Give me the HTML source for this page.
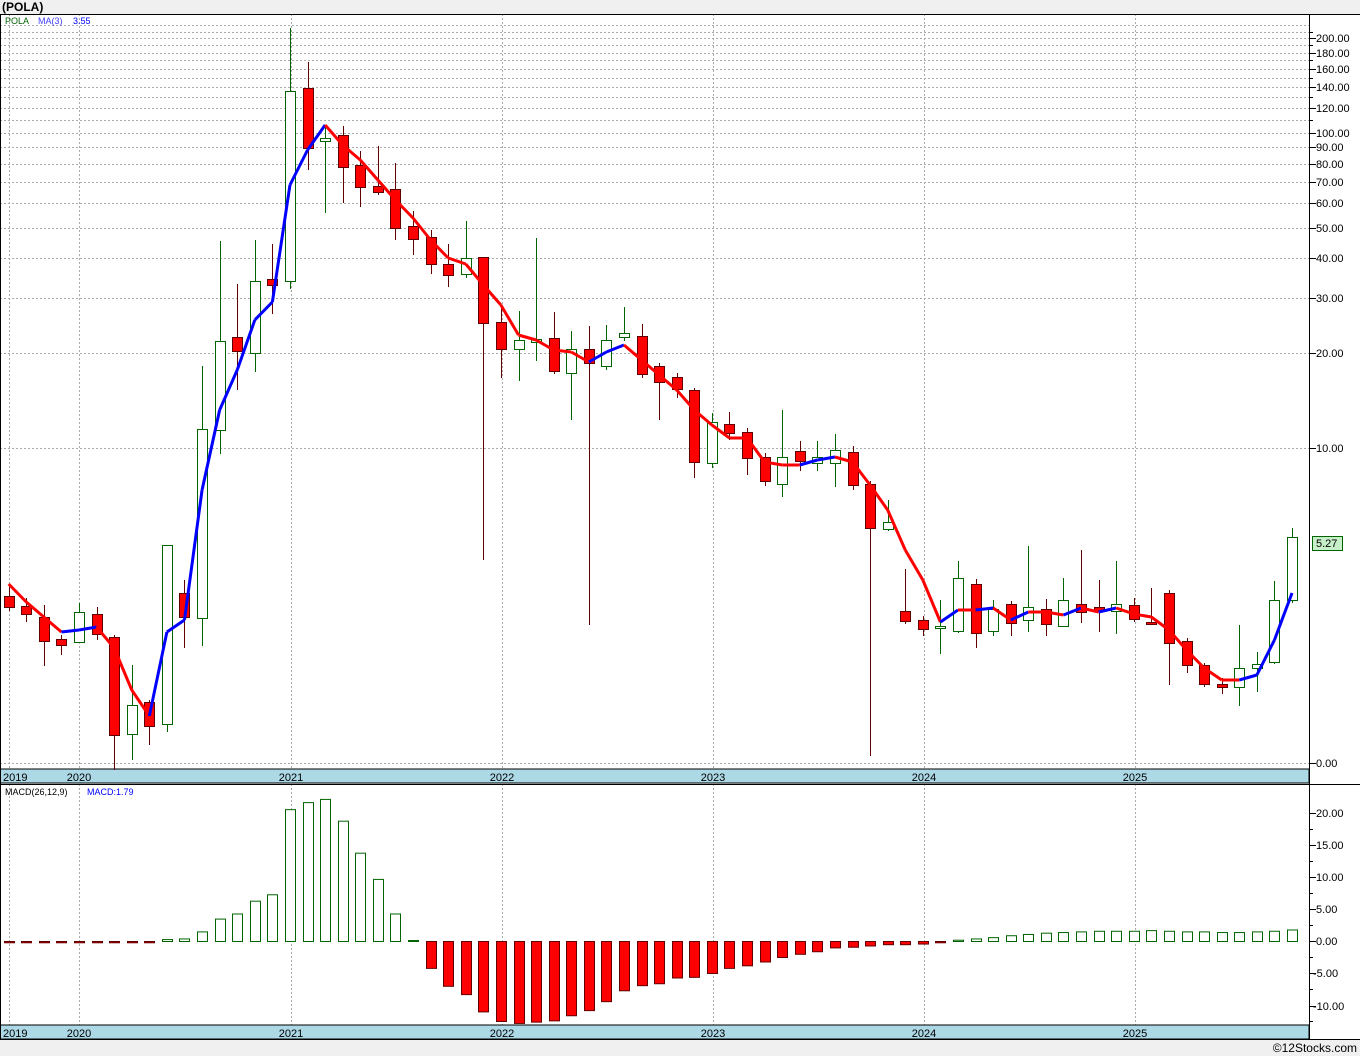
<!DOCTYPE html>
<html><head><meta charset="utf-8"><style>
html,body{margin:0;padding:0;background:#f0f0f0;}
svg{display:block;font-family:"Liberation Sans",sans-serif;}
</style></head><body>
<svg id="s" width="1360" height="1056" xmlns="http://www.w3.org/2000/svg">
<rect x="0" y="0" width="1360" height="1056" fill="#f0f0f0"/>
<rect x="0" y="14" width="1360" height="1025" fill="#fff"/>
<text x="2" y="11" font-size="12" font-weight="bold" fill="#000">(POLA)</text>
<g id="g"></g>
<text x="5" y="24" font-size="9" fill="#006400">POLA</text>
<text x="38" y="24" font-size="9" fill="#4040ff">MA(3)</text>
<text x="73" y="24" font-size="9" fill="#0000ff">3.55</text>
<text x="5" y="795" font-size="9" fill="#000">MACD(26,12,9)</text>
<text x="87" y="795" font-size="9" fill="#0000ff">MACD:1.79</text>
<text x="1357" y="1052" font-size="12" fill="#000" text-anchor="end">©12Stocks.com</text>
</svg>
<script>
var g=document.getElementById('g'),h='';
function ln(x1,y1,x2,y2,c,w,d){h+='<line x1="'+x1+'" y1="'+y1+'" x2="'+x2+'" y2="'+y2+'" stroke="'+c+'" stroke-width="'+(w||1)+'"'+(d?' stroke-dasharray="'+d+'"':'')+'/>';}
function Y(v){return 448-315*Math.log10(v/10);}
var levs=[10,20,30,40,50,60,70,80,90,100,110,120,130,140,150,160,170,180,190,200,210,220];
levs.forEach(function(v){var y=Math.round(Y(v))+.5;ln(0,y,1309,y,'#aaa',1,'2,2');});
ln(0,763.5,1309,763.5,'#aaa',1,'2,2');
var yrs=[[9,'2019'],[79,'2020'],[291,'2021'],[502,'2022'],[713,'2023'],[924,'2024'],[1135,'2025']];
yrs.forEach(function(a){ln(a[0]+.5,14,a[0]+.5,769,'#aaa',1,'2,2');ln(a[0]+.5,784,a[0]+.5,1025,'#aaa',1,'2,2');});
// date strips
h+='<rect x="0" y="769" width="1309" height="14" fill="#add8e6" stroke="#000"/>';
h+='<rect x="0" y="1025" width="1309" height="14" fill="#add8e6" stroke="#000"/>';
yrs.forEach(function(a){h+='<text x="'+(a[0]+(a[0]<20?-6:0))+'" y="781" font-size="11" text-anchor="'+(a[0]<20?'start':'middle')+'">'+a[1]+'</text>';h+='<text x="'+(a[0]+(a[0]<20?-6:0))+'" y="1037" font-size="11" text-anchor="'+(a[0]<20?'start':'middle')+'">'+a[1]+'</text>';});
// borders
ln(0,14.5,1360,14.5,'#000');ln(1309.5,14,1309.5,1039,'#000');ln(0,784.5,1360,784.5,'#000');ln(0,1039.5,1360,1039.5,'#000');ln(.5,14,.5,1039,'#000');
// right axis labels
var lab=[200,180,160,140,120,100,90,80,70,60,50,40,30,20,10];
lab.forEach(function(v){var y=Math.round(Y(v));ln(1309,y+.5,1316,y+.5,'#000');h+='<text x="1316" y="'+(y+4)+'" font-size="11" fill="#000">'+v.toFixed(2)+'</text>';});
[210,190,170,150,130,110].forEach(function(v){var y=Math.round(Y(v));ln(1309,y+.5,1313,y+.5,'#000');});
ln(1309,763.5,1316,763.5,'#000');h+='<text x="1316" y="767" font-size="11">0.00</text>';
var C=[['r',596,607,585,611],['r',606,614,598,622],['r',617,641,605,666],['r',639,645,635,655],['g',612,642,603,643],['r',614,634,607,640],['r',637,735,635,770],['g',705,734,665,760],['r',702,726,700,745],['g',545,724,545,732],['r',593,617,580,648],['g',429,618,366,646],['g',341,430,241,454],['r',337,351,284,390],['g',281,353,240,372],['r',279,285,244,314],['g',91,281,28,289],['r',88,148,62,170],['g',138,141,125,213],['r',135,167,126,203],['r',165,187,151,207],['r',186,192,146,195],['r',189,228,163,240],['r',226,239,211,255],['r',237,264,230,274],['r',264,275,244,287],['g',258,274,221,278],['r',257,323,257,560],['r',322,349,307,378],['g',340,349,311,381],['g',339,342,238,361],['r',338,371,312,374],['g',349,373,331,420],['r',349,363,326,625],['g',340,366,325,370],['g',333,337,307,341],['r',336,374,324,378],['r',366,382,363,420],['r',377,389,373,398],['r',390,462,388,478],['g',422,463,413,468],['r',424,433,412,440],['r',432,458,428,475],['r',457,481,453,486],['g',457,484,410,497],['r',451,461,441,471],['g',457,463,441,471],['g',450,463,434,487],['r',452,485,446,490],['r',484,528,481,756],['g',522,529,500,531],['r',611,621,569,624],['r',620,629,616,636],['g',626,628,600,654],['g',578,631,561,633],['r',584,633,579,648],['g',609,631,600,636],['r',604,623,601,636],['g',607,620,546,632],['r',609,624,599,636],['g',600,626,578,627],['r',604,612,550,623],['r',607,611,580,632],['g',604,611,561,634],['r',605,619,598,622],['r',622,624,588,625],['r',593,643,590,685],['r',641,665,638,673],['r',665,684,663,687],['r',684,687,678,694],['g',668,687,625,706],['g',664,668,652,692],['g',600,662,581,664],['g',537,600,528,603]];
function X(i){return 79+(i-4)*17.58;}
C.forEach(function(c,i){var x=Math.round(X(i))+.5;var col=c[0]=='r'?'#600000':'#006400';ln(x,c[3],x,c[4],col);
 h+='<rect x="'+(x-5)+'" y="'+(c[1]+.5)+'" width="10" height="'+Math.max(c[2]-c[1],2)+'" fill="'+(c[0]=='r'?'#ff0000':'#fff')+'" stroke="'+col+'"/>';});
var M=[584,602,617,632,630,627,648,690,716,632,620,490,410,370,320,302,185,150,125,145,160,180,200,218,240,258,264,285,305,335,340,350,352,362,352,345,360,375,390,410,425,438,438,462,465,465,460,457,462,485,510,550,580,622,610,610,608,620,612,612,615,608,612,608,614,617,630,650,668,680,680,675,640,593];
for(var i=1;i<M.length;i++){ln(X(i-1),M[i-1],X(i),M[i],M[i]<M[i-1]?'#0000ff':'#ff0000',3);}
// 5.27 box
h+='<rect x="1312.5" y="536.5" width="30" height="14" fill="#c8f0c8" stroke="#006400"/><text x="1316" y="547" font-size="11">5.27</text>';
// MACD
[[20,813],[15,845],[10,877],[5,909],[0,941],[-5,973],[-10,1006]].forEach(function(a){ln(1309,a[1]+.5,1316,a[1]+.5,'#000');h+='<text x="'+(a[0]<0?1313:1316)+'" y="'+(a[1]+4)+'" font-size="11">'+a[0].toFixed(2)+'</text>';});
[829,861,893,925,957,989,1021].forEach(function(y){ln(1309,y+.5,1313,y+.5,'#000');});
var D=[-.2,-.2,-.2,-.2,-.2,-.2,-.2,-.2,-.2,.3,.4,1.5,3.5,4.3,6.3,7.3,20.6,21.7,22.2,18.8,13.8,9.7,4.3,.1,-4.2,-7,-8.3,-11,-12.5,-12.8,-12.6,-12.4,-11.6,-10.8,-9.4,-7.7,-6.9,-6.6,-5.7,-5.6,-5,-4.2,-3.8,-3.2,-2.5,-2,-1.6,-1,-.9,-.7,-.5,-.5,-.4,-.2,.2,.4,.6,.9,1.1,1.3,1.4,1.5,1.6,1.6,1.6,1.7,1.6,1.5,1.5,1.4,1.4,1.5,1.6,1.8];
D.forEach(function(v,i){var x=Math.round(X(i))+.5;var hh=Math.max(Math.abs(v)*6.4,1);var y=v>=0?941-hh:941;
 h+='<rect x="'+(x-5)+'" y="'+(y+.5)+'" width="10" height="'+hh+'" fill="'+(v<0?'#ff0000':'#fff')+'" stroke="'+(v<0?'#600000':'#006400')+'"/>';});
g.innerHTML=h;
</script>
</body></html>
